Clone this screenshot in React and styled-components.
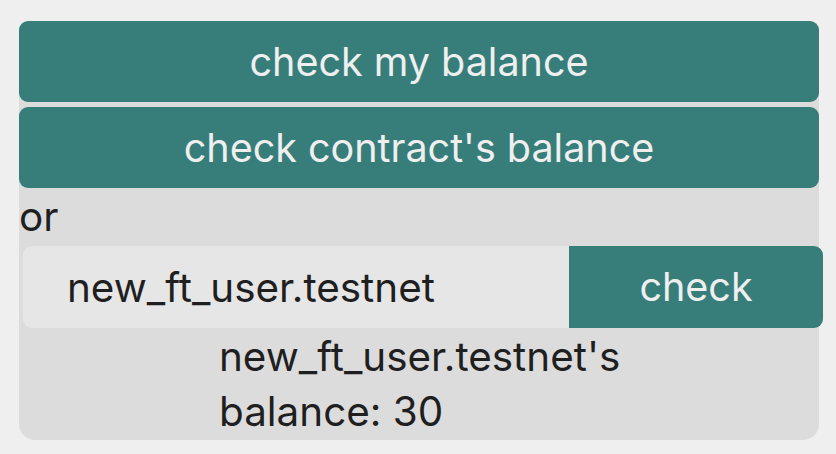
import React from "react";
import styled, { createGlobalStyle } from "styled-components";

const Global = createGlobalStyle`
  html, body { margin: 0; padding: 0; background: #efefef; }
  body { font-family: Inter, "Noto Sans", sans-serif; }
`;

const Page = styled.div`
  padding: 21px 0 0 19px;
`;

const Panel = styled.div`
  width: 800px;
  background: #dcdcdc;
  border-radius: 16px;
  display: flex;
  flex-direction: column;
  gap: 5px;
  font-size: 40.4px;
  color: #1f1f1f;
`;

const Button = styled.button`
  border: none;
  background: #377e7b;
  color: #efefef;
  font-family: inherit;
  font-size: 39.5px;
  height: 81px;
  width: 100%;
  border-radius: 9px;
  padding: 0;
  cursor: pointer;
`;

const Or = styled.div`
  line-height: 58px;
  margin-top: -5px;
  margin-bottom: -5px;
`;

const Row = styled.div`
  display: flex;
  width: 100%;
  margin-left: 4px;
  height: 82px;
`;

const Input = styled.div`
  flex: 1;
  background: #e6e6e6;
  border-radius: 9px 0 0 9px;
  display: flex;
  align-items: center;
  padding-left: 44px;
`;

const CheckButton = styled(Button)`
  width: 254px;
  height: 82px;
  border-radius: 0 9px 9px 0;
`;

const Result = styled.div`
  width: 400px;
  margin: -4px auto 0 auto;
  line-height: 55px;
  padding-bottom: 1px;
  white-space: nowrap;
`;

export default function App() {
  return (
    <>
      <Global />
      <Page>
        <Panel>
          <Button>check my balance</Button>
          <Button>check contract's balance</Button>
          <Or>or</Or>
          <Row>
            <Input>new_ft_user.testnet</Input>
            <CheckButton>check</CheckButton>
          </Row>
          <Result>
            new_ft_user.testnet's
            <br />
            balance: 30
          </Result>
        </Panel>
      </Page>
    </>
  );
}
